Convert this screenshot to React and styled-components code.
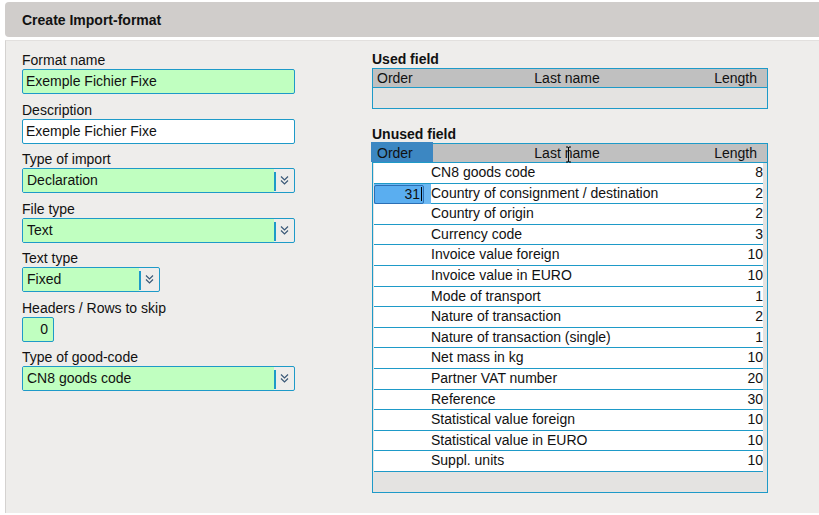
import React from "react";
import styled, { createGlobalStyle } from "styled-components";

const blue = "#1e9ac8";
const green = "#c0ffc0";
const panelBg = "#eeedeb";

const GlobalStyle = createGlobalStyle`
  html, body {
    margin: 0;
    padding: 0;
    background: #ffffff;
  }
  body {
    font-family: "Liberation Sans", Arial, sans-serif;
    color: #111;
  }
`;

const Page = styled.div`
  width: 819px;
  height: 515px;
  padding: 2px 0 0 5px;
  box-sizing: border-box;
  overflow: hidden;
`;

const TitleBar = styled.div`
  height: 35px;
  background: #d0cdcb;
  border-radius: 4px 0 0 4px;
  display: flex;
  align-items: center;
  padding-left: 17px;
  font-weight: bold;
  font-size: 14px;
  color: #111;
`;

const Panel = styled.div`
  margin-top: 3px;
  height: 473px;
  box-sizing: border-box;
  background: ${panelBg};
  border-left: 1px solid #d4d2d0;
  border-top: 1px solid #e2e0de;
  padding: 11px 0 0 16px;
  display: grid;
  grid-template-columns: 273px 396px;
  column-gap: 77px;
  align-items: start;
`;

const FormColumn = styled.div`
  display: flex;
  flex-direction: column;
  gap: 7.5px;
`;

const Field = styled.div`
  display: flex;
  flex-direction: column;
  gap: 1px;
`;

const Label = styled.div`
  font-size: 14px;
  line-height: 16px;
  color: #111;
`;

const TextInput = styled.div`
  height: 25px;
  box-sizing: border-box;
  width: ${p => p.$width || 273}px;
  border: 1px solid ${blue};
  border-radius: 2px;
  background: ${p => (p.$green ? green : "#fff")};
  font-size: 14px;
  line-height: 23px;
  padding: 0 5px 0 3px;
  text-align: ${p => p.$align || "left"};
  white-space: nowrap;
`;

const SelectBox = styled.div`
  height: 25px;
  box-sizing: border-box;
  width: ${p => p.$width || 273}px;
  border: 1px solid ${blue};
  border-radius: 2px;
  background: ${panelBg};
  display: flex;
  overflow: hidden;
`;

const SelectValue = styled.div`
  flex: 1;
  background: ${green};
  font-size: 14px;
  line-height: 23px;
  padding-left: 4px;
  white-space: nowrap;
`;

const SelectButton = styled.div`
  width: 20px;
  display: flex;
  align-items: center;
  justify-content: center;
  position: relative;
  &::before {
    content: "";
    position: absolute;
    left: 0;
    top: 3px;
    bottom: 1px;
    width: 2px;
    background: ${blue};
  }
`;

const ListColumn = styled.div`
  display: flex;
  flex-direction: column;
  margin-top: -1px;
`;

const SectionTitle = styled.div`
  font-size: 14px;
  font-weight: bold;
  line-height: 16px;
  margin-top: ${p => p.$top || 0}px;
  margin-bottom: 1px;
`;

const Table = styled.div`
  border: 1px solid ${blue};
  background: #e4e3e1;
`;

const HeadRow = styled.div`
  display: grid;
  grid-template-columns: 60px 1fr 66px;
  height: 18px;
  background: #c0c0c0;
  border-bottom: 1px solid ${blue};
  font-size: 14px;
  line-height: 18px;
`;

const HeadCell = styled.div`
  position: relative;
  text-align: ${p => p.$align || "left"};
  background: ${p => (p.$active ? "#3c87c2" : "transparent")};
  margin: ${p => (p.$active ? "-2px 0 0 -2px" : "0")};
  padding-top: ${p => (p.$active ? "2px" : "0")};
  padding-right: ${p => (p.$align === "right" ? "10px" : "0")};
  padding-left: ${p => (p.$active ? "6px" : p.$align ? "0" : "4px")};
`;

const EmptyBody = styled.div`
  height: 20px;
`;

const RowsBody = styled.div`
  padding: 0 4px 20px 1px;
`;

const Row = styled.div`
  display: grid;
  grid-template-columns: 57px 1fr 40px;
  height: 19.6px;
  border-bottom: 1px solid ${blue};
  background: #fff;
  font-size: 14px;
  line-height: 19px;
`;

const OrderCell = styled.div`
  position: relative;
  background: ${p => (p.$editing ? "#6cb8f2" : "transparent")};
  display: flex;
  align-items: stretch;
`;

const OrderEditor = styled.div`
  width: 50px;
  box-sizing: border-box;
  margin: 1px 0 0 0;
  border: 1px solid #2c6fb4;
  border-radius: 2px;
  background: #5aaef0;
  text-align: right;
  padding-right: 1px;
  line-height: 17px;
  &::after {
    content: "";
    display: inline-block;
    width: 1px;
    height: 14px;
    margin-left: 1px;
    vertical-align: -2px;
    background: #000;
  }
`;

const NameCell = styled.div`
  white-space: nowrap;
`;

const LengthCell = styled.div`
  text-align: right;
`;

const Cursor = styled.svg`
  position: absolute;
  left: 132px;
  top: 2px;
`;

const Chevrons = () => (
  <svg width="9" height="11" viewBox="0 0 9 11">
    <polyline points="1,1.5 4.5,5 8,1.5" fill="none" stroke="#3a5877" strokeWidth="1.2" />
    <polyline points="1,5.5 4.5,9 8,5.5" fill="none" stroke="#3a5877" strokeWidth="1.2" />
  </svg>
);

const Select = ({ value, width }) => (
  <SelectBox $width={width}>
    <SelectValue>{value}</SelectValue>
    <SelectButton>
      <Chevrons />
    </SelectButton>
  </SelectBox>
);

const unused = [
  ["CN8 goods code", 8],
  ["Country of consignment / destination", 2, 31],
  ["Country of origin", 2],
  ["Currency code", 3],
  ["Invoice value foreign", 10],
  ["Invoice value in EURO", 10],
  ["Mode of transport", 1],
  ["Nature of transaction", 2],
  ["Nature of transaction (single)", 1],
  ["Net mass in kg", 10],
  ["Partner VAT number", 20],
  ["Reference", 30],
  ["Statistical value foreign", 10],
  ["Statistical value in EURO", 10],
  ["Suppl. units", 10],
];

export default function App() {
  return (
    <Page>
      <GlobalStyle />
      <TitleBar>Create Import-format</TitleBar>
      <Panel>
        <FormColumn>
          <Field>
            <Label>Format name</Label>
            <TextInput $green>Exemple Fichier Fixe</TextInput>
          </Field>
          <Field>
            <Label>Description</Label>
            <TextInput>Exemple Fichier Fixe</TextInput>
          </Field>
          <Field>
            <Label>Type of import</Label>
            <Select value="Declaration" />
          </Field>
          <Field>
            <Label>File type</Label>
            <Select value="Text" />
          </Field>
          <Field>
            <Label>Text type</Label>
            <Select value="Fixed" width={138} />
          </Field>
          <Field>
            <Label>Headers / Rows to skip</Label>
            <TextInput $green $width={32} $align="right">0</TextInput>
          </Field>
          <Field>
            <Label>Type of good-code</Label>
            <Select value="CN8 goods code" />
          </Field>
        </FormColumn>

        <ListColumn>
          <SectionTitle>Used field</SectionTitle>
          <Table>
            <HeadRow>
              <HeadCell>Order</HeadCell>
              <HeadCell $align="center">Last name</HeadCell>
              <HeadCell $align="right">Length</HeadCell>
            </HeadRow>
            <EmptyBody />
          </Table>

          <SectionTitle $top={17}>Unused field</SectionTitle>
          <Table>
            <HeadRow>
              <HeadCell $active>Order</HeadCell>
              <HeadCell $align="center">
                Last name
                <Cursor width="7" height="18" viewBox="0 0 7 18">
                  <path d="M1 1h2l0.5 1 0.5-1h2M3.5 2v13M1 16h2l0.5-1 0.5 1h2" fill="none" stroke="#000" strokeWidth="1" />
                </Cursor>
              </HeadCell>
              <HeadCell $align="right">Length</HeadCell>
            </HeadRow>
            <RowsBody>
              {unused.map(([name, len, order]) => (
                <Row key={name}>
                  <OrderCell $editing={!!order}>
                    {order && <OrderEditor>{order}</OrderEditor>}
                  </OrderCell>
                  <NameCell>{name}</NameCell>
                  <LengthCell>{len}</LengthCell>
                </Row>
              ))}
            </RowsBody>
          </Table>
        </ListColumn>
      </Panel>
    </Page>
  );
}
